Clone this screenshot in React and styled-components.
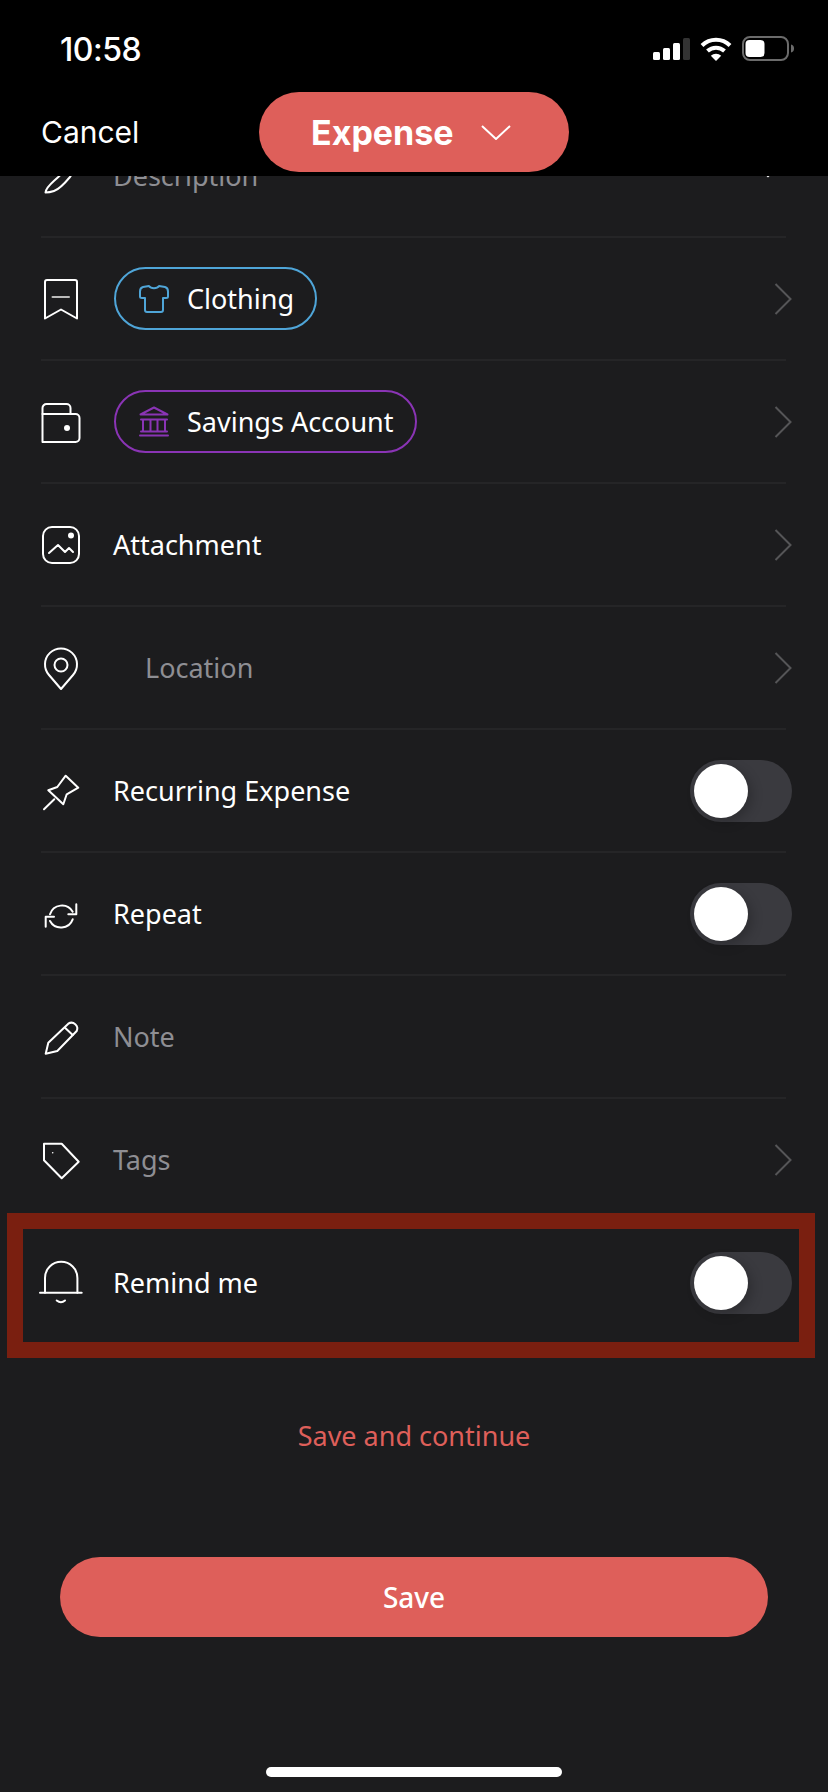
import React from 'react'
import styled, { createGlobalStyle } from 'styled-components'

const GlobalStyle = createGlobalStyle`
  html, body {
    margin: 0;
    padding: 0;
    background: #1c1c1e;
  }
  * {
    box-sizing: border-box;
  }
`

const Page = styled.div`
  width: 828px;
  height: 1792px;
  overflow: hidden;
  background: #1c1c1e;
  font-family: "Noto Sans", sans-serif;
  color: #fff;
`

const TopBar = styled.div`
  position: relative;
  z-index: 1;
  height: 176px;
  background: #000;
`

const StatusBar = styled.div`
  display: flex;
  align-items: center;
  justify-content: space-between;
  height: 88px;
  padding: 10px 34px 0 60px;
`

const Time = styled.span`
  font-family: Inter, sans-serif;
  font-size: 32px;
  font-weight: 500;
  letter-spacing: -0.5px;
`

const StatusIcons = styled.div`
  display: flex;
  align-items: center;
  gap: 10px;
`

const Header = styled.div`
  display: flex;
  align-items: center;
  height: 88px;
  padding-left: 41px;
`

const Cancel = styled.span`
  width: 218px;
  font-family: Inter, sans-serif;
  font-size: 30px;
`

const TypePill = styled.div`
  display: flex;
  align-items: center;
  gap: 27px;
  width: 310px;
  height: 80px;
  padding-left: 52px;
  border-radius: 40px;
  background: #de5f5a;
  font-family: Inter, sans-serif;
  font-size: 34px;
  font-weight: 700;
`

const List = styled.div`
  width: 745px;
  margin: -61px 0 0 41px;
`

const Row = styled.div`
  position: relative;
  display: flex;
  align-items: center;
  height: 123px;
  border-bottom: 2px solid #252527;
`

const IconSlot = styled.svg`
  flex: none;
  width: 40px;
  height: 40px;
  margin-right: 32px;
  overflow: visible;
  fill: none;
  stroke: #fff;
  stroke-width: 2;
  stroke-linecap: round;
  stroke-linejoin: round;
`

const Label = styled.span`
  font-size: 27px;
  color: ${(p) => (p.$muted ? '#8e8e93' : '#fff')};
  margin-left: ${(p) => (p.$indent ? '32px' : '0')};
`

const Chip = styled.div`
  display: flex;
  align-items: center;
  gap: 18px;
  height: 63px;
  margin-left: 1px;
  padding: 0 21px 0 23px;
  border: 2px solid ${(p) => p.$color};
  border-radius: 32px;
  font-size: 27px;
`

const ChipIcon = styled.svg`
  flex: none;
  width: 30px;
  height: 31px;
  fill: none;
  stroke: ${(p) => p.$color};
  stroke-width: 2;
  stroke-linecap: round;
  stroke-linejoin: round;
`

const Trailing = styled.div`
  display: flex;
  align-items: center;
  margin-left: auto;
  margin-right: -6px;
`

const ChevronRight = styled.svg`
  width: 18px;
  height: 32px;
  fill: none;
  stroke: #555557;
  stroke-width: 2;
`

const ChevronDown = styled.svg`
  width: ${(p) => p.$w}px;
  height: ${(p) => p.$h}px;
  fill: none;
  stroke: #fff;
  stroke-width: 2;
`

const DescriptionChevron = styled(ChevronDown)`
  margin: 0 0 0 auto;
`

const Toggle = styled.div`
  display: flex;
  align-items: center;
  width: 102px;
  height: 62px;
  padding: 4px;
  border-radius: 31px;
  background: #3a3a3f;
`

const Knob = styled.div`
  width: 54px;
  height: 54px;
  border-radius: 50%;
  background: #fff;
  box-shadow: 4px 4px 12px rgba(0, 0, 0, 0.22);
`

const Highlight = styled.div`
  position: absolute;
  top: -9px;
  left: -34px;
  width: 808px;
  height: 145px;
  border: 16px solid #7a1f10;
  pointer-events: none;
`

const Footer = styled.div`
  display: flex;
  flex-direction: column;
  align-items: center;
`

const SaveContinue = styled.div`
  margin-top: 71px;
  line-height: 40px;
  font-size: 27px;
  color: #de5f5a;
`

const SaveButton = styled.div`
  display: flex;
  align-items: center;
  justify-content: center;
  width: 708px;
  height: 80px;
  margin-top: 101px;
  border-radius: 40px;
  background: #de5f5a;
  font-size: 28px;
  font-weight: 500;
`

const HomeBar = styled.div`
  width: 296px;
  height: 10px;
  margin-top: 130px;
  border-radius: 5px;
  background: #fff;
`

const icons = {
  description: (
    <path d="M4.5 36.5C5 31 11 27 17.3 21L28 10L33 15L29 21C24 27 19 33 13 35C10 36 7 36.5 4.5 36.5Z" />
  ),
  bookmark: (
    <>
      <path d="M4 39.5V3a2 2 0 0 1 2-2h28a2 2 0 0 1 2 2v36.5l-16-9z" />
      <path d="M11.5 18h16.5" stroke="#bbb" />
    </>
  ),
  wallet: (
    <>
      <path d="M1.5 12V6a4 4 0 0 1 4-4h20a4 4 0 0 1 4 4v5" />
      <path d="M1.5 12h33a4 4 0 0 1 4 4v20a4 4 0 0 1-4 4h-33z" />
      <circle cx="26" cy="26" r="3" fill="#fff" stroke="none" />
    </>
  ),
  image: (
    <>
      <rect x="2" y="2" width="36" height="36" rx="9" />
      <circle cx="30" cy="10.5" r="3" fill="#fff" stroke="none" />
      <path d="M8 28l9-8 7 7 4-4 4 4" />
    </>
  ),
  pin: (
    <>
      <path d="M20 41L8 27A16 16 0 1 1 32 27Z" />
      <circle cx="20" cy="17" r="6.5" />
    </>
  ),
  pushpin: (
    <>
      <path d="M24.7 4.7L37.3 16.7L25.7 23.3L22.3 33.3L7.3 19.3L16.3 16Z" />
      <path d="M3 38.3L13.3 28.3" />
    </>
  ),
  repeat: (
    <>
      <path d="M9 20.3A12.5 12.5 0 0 1 31.7 17.7" />
      <path d="M35.3 10.3V20.3H27.3" />
      <path d="M31.7 25.3A12.5 12.5 0 0 1 9 27" />
      <path d="M4.7 32.7V22.7H13" />
    </>
  ),
  pencil: (
    <>
      <path d="M4.7 36.7L7.3 25.7L27.3 6.7A5.8 5.8 0 0 1 35.7 14L16.3 34Z" />
      <path d="M24 10.7L31.7 18" />
    </>
  ),
  tag: (
    <>
      <path d="M3 3.7H20.7L37.7 21.7L20.7 38.3L3 20.3Z" />
      <circle cx="11.7" cy="12.7" r="0.8" fill="#fff" stroke="none" />
    </>
  ),
  bell: (
    <>
      <path d="M4 29.7V15a16.2 16.2 0 0 1 32.4 0V29.7" />
      <path d="M-1 29.7H40.7" />
      <path d="M15.7 37.5Q20 41 24 37.5" />
    </>
  ),
}

const ShirtIcon = () => (
  <ChipIcon $color="#4fa5d8" viewBox="0 0 30 31">
    <path d="M10 3C12 6 18 6 20 3L26 4C28 4.500 29 6.500 29 8.500V13.500C29 14.500 28 15 27 15H24V27C24 28 23 29 22 29H8C7 29 6 28 6 27V15H3C2 15 1 14.500 1 13.500V8.500C1 6.500 2 4.500 4 4Z" />
  </ChipIcon>
)

const BankIcon = () => (
  <ChipIcon $color="#8a34b5" viewBox="0 0 30 31">
    <path d="M1.500 8.500L15 1.500L28.500 8.500Z" />
    <path d="M2 13.500H28M4 13.500V25.500M11.500 13.500V25.500M18.500 13.500V25.500M26 13.500V25.500M2 25.500H28M1 29.500H29" />
  </ChipIcon>
)

const Chevron = () => (
  <Trailing>
    <ChevronRight viewBox="0 0 18 32">
      <path d="M1.500 1L16.500 16L1.500 31" />
    </ChevronRight>
  </Trailing>
)

const Switch = () => (
  <Trailing>
    <Toggle>
      <Knob />
    </Toggle>
  </Trailing>
)

const rows = [
  { id: 'clothing', icon: 'bookmark', chip: { color: '#4fa5d8', text: 'Clothing', icon: <ShirtIcon /> }, end: 'chevron' },
  { id: 'account', icon: 'wallet', chip: { color: '#8a34b5', text: 'Savings Account', icon: <BankIcon /> }, end: 'chevron' },
  { id: 'attachment', icon: 'image', label: 'Attachment', end: 'chevron' },
  { id: 'location', icon: 'pin', label: 'Location', muted: true, indent: true, end: 'chevron' },
  { id: 'recurring', icon: 'pushpin', label: 'Recurring Expense', end: 'switch' },
  { id: 'repeat', icon: 'repeat', label: 'Repeat', end: 'switch' },
  { id: 'note', icon: 'pencil', label: 'Note', muted: true },
  { id: 'tags', icon: 'tag', label: 'Tags', muted: true, end: 'chevron' },
  { id: 'remind', icon: 'bell', label: 'Remind me', end: 'switch', highlight: true },
]

const StatusGlyphs = () => (
  <StatusIcons>
    <svg width="37" height="23" viewBox="0 0 37 23" fill="#fff">
      <rect x="0" y="14" width="7" height="8" rx="1.500" />
      <rect x="10" y="10" width="7" height="12" rx="1.500" />
      <rect x="20" y="5" width="7" height="17" rx="1.500" />
      <rect x="30" y="0" width="7" height="22" rx="1.500" fill="#333" />
    </svg>
    <svg width="32" height="24" viewBox="0 0 32 24" fill="none" stroke="#fff" strokeWidth="4">
      <path d="M2 8.500A20 20 0 0 1 30 8.500" />
      <path d="M7.500 14A12.500 12.500 0 0 1 24.500 14" />
      <path d="M16 24L10.800 18.800A7.500 7.500 0 0 1 21.200 18.800Z" fill="#fff" stroke="none" />
    </svg>
    <svg width="52" height="26" viewBox="0 0 52 26" fill="none">
      <rect x="1" y="1" width="45" height="23" rx="7" stroke="#6b6b6b" strokeWidth="2" />
      <rect x="3.500" y="4" width="19" height="17" rx="4" fill="#fff" />
      <path d="M49 8.500v8a4 4 0 0 0 3-4a4 4 0 0 0-3-4z" fill="#6b6b6b" />
    </svg>
  </StatusIcons>
)

const App = () => {
  return (
    <Page>
      <GlobalStyle />
      <TopBar>
        <StatusBar>
          <Time>10:58</Time>
          <StatusGlyphs />
        </StatusBar>
        <Header>
          <Cancel>Cancel</Cancel>
          <TypePill>
            Expense
            <ChevronDown $w={30} $h={15} viewBox="0 0 30 15">
              <path d="M1 1L15 14L29 1" />
            </ChevronDown>
          </TypePill>
        </Header>
      </TopBar>

      <List>
        <Row>
          <IconSlot viewBox="0 0 40 40">{icons.description}</IconSlot>
          <Label $muted>Description</Label>
          <DescriptionChevron $w={36} $h={36} viewBox="0 0 36 36">
            <path d="M0 0L18 18L36 0" />
          </DescriptionChevron>
        </Row>
        {rows.map((row) => (
          <Row key={row.id}>
            <IconSlot viewBox="0 0 40 40">{icons[row.icon]}</IconSlot>
            {row.chip ? (
              <Chip $color={row.chip.color}>
                {row.chip.icon}
                {row.chip.text}
              </Chip>
            ) : (
              <Label $muted={row.muted} $indent={row.indent}>
                {row.label}
              </Label>
            )}
            {row.end === 'chevron' && <Chevron />}
            {row.end === 'switch' && <Switch />}
            {row.highlight && <Highlight />}
          </Row>
        ))}
      </List>

      <Footer>
        <SaveContinue>Save and continue</SaveContinue>
        <SaveButton>Save</SaveButton>
        <HomeBar />
      </Footer>
    </Page>
  )
}

export default App
